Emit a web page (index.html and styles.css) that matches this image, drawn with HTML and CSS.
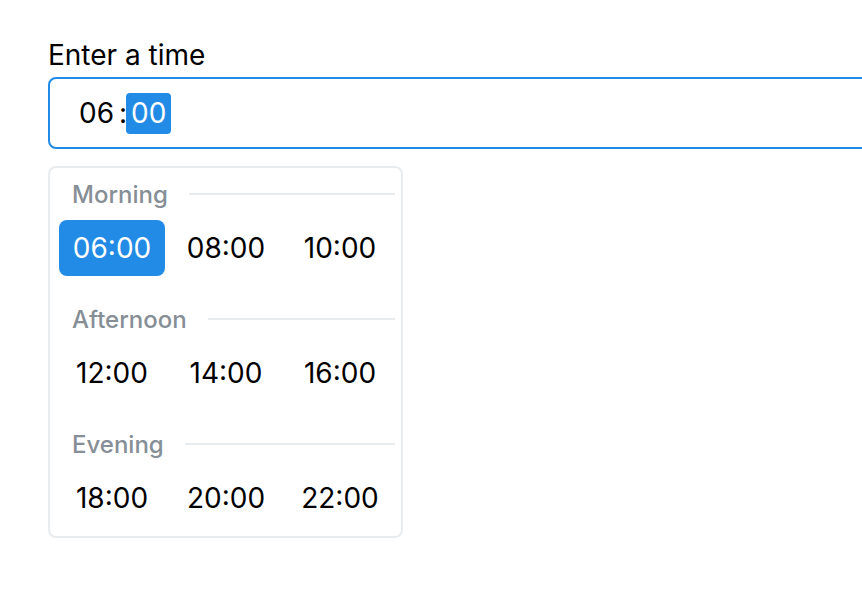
FILE: index.html
```html
<!DOCTYPE html>
<html lang="en">
<head>
<meta charset="utf-8">
<title>Time picker</title>
<link rel="stylesheet" href="styles.css">
</head>
<body>
<div class="wrapper">
  <label class="label">Enter a time</label>
  <div class="input">
    <span class="field">06</span><span class="sep">:</span><span class="field field-active">00</span>
  </div>
  <div class="dropdown">
    <div class="group">
      <div class="group-label"><span>Morning</span><span class="rule"></span></div>
      <div class="grid">
        <button class="preset preset-active">06:00</button>
        <button class="preset">08:00</button>
        <button class="preset">10:00</button>
      </div>
    </div>
    <div class="group">
      <div class="group-label"><span>Afternoon</span><span class="rule"></span></div>
      <div class="grid">
        <button class="preset">12:00</button>
        <button class="preset">14:00</button>
        <button class="preset">16:00</button>
      </div>
    </div>
    <div class="group">
      <div class="group-label"><span>Evening</span><span class="rule"></span></div>
      <div class="grid">
        <button class="preset">18:00</button>
        <button class="preset">20:00</button>
        <button class="preset">22:00</button>
      </div>
    </div>
  </div>
</div>
</body>
</html>
```

FILE: styles.css
```css
html, body {
  margin: 0;
  background: #fff;
  overflow: hidden;
}
body {
  font-family: Inter, "Noto Sans", sans-serif;
  color: #000;
  padding: 34px 0 0 48px;
}
.wrapper {
  width: 900px;
}
.label {
  display: block;
  font-size: 28px;
  font-weight: 400;
  line-height: 43px;
}
.input {
  box-sizing: border-box;
  height: 72px;
  border: 2px solid #228be6;
  border-radius: 8px;
  padding: 0 24px;
  display: flex;
  align-items: center;
  font-size: 28px;
}
.field {
  display: inline-block;
  height: 41px;
  line-height: 41px;
  padding: 0 5px;
  border-radius: 4px;
}
.field-active {
  background: #228be6;
  color: #fff;
}
.sep {
  line-height: 41px;
  margin-right: -1px;
}
.dropdown {
  box-sizing: border-box;
  width: 355px;
  margin-top: 17px;
  border: 2px solid #e9ecef;
  border-radius: 8px;
  padding: 8px 8px 10px 9px;
  display: flex;
  flex-direction: column;
  gap: 25px;
}
.group-label {
  display: flex;
  align-items: center;
  gap: 21px;
  height: 36px;
  padding-left: 13px;
  font-size: 24px;
  font-weight: 500;
  color: #868e96;
  margin-bottom: 8px;
}
.rule {
  flex: 1;
  height: 2px;
  background: #e9ecef;
  margin-right: -2px;
}
.grid {
  display: grid;
  grid-template-columns: repeat(3, 1fr);
  gap: 8px;
}
.preset {
  height: 56px;
  border: 0;
  border-radius: 8px;
  background: transparent;
  font-family: inherit;
  font-size: 28px;
  color: #000;
  padding: 0;
}
.preset-active {
  background: #228be6;
  color: #fff;
}
```
